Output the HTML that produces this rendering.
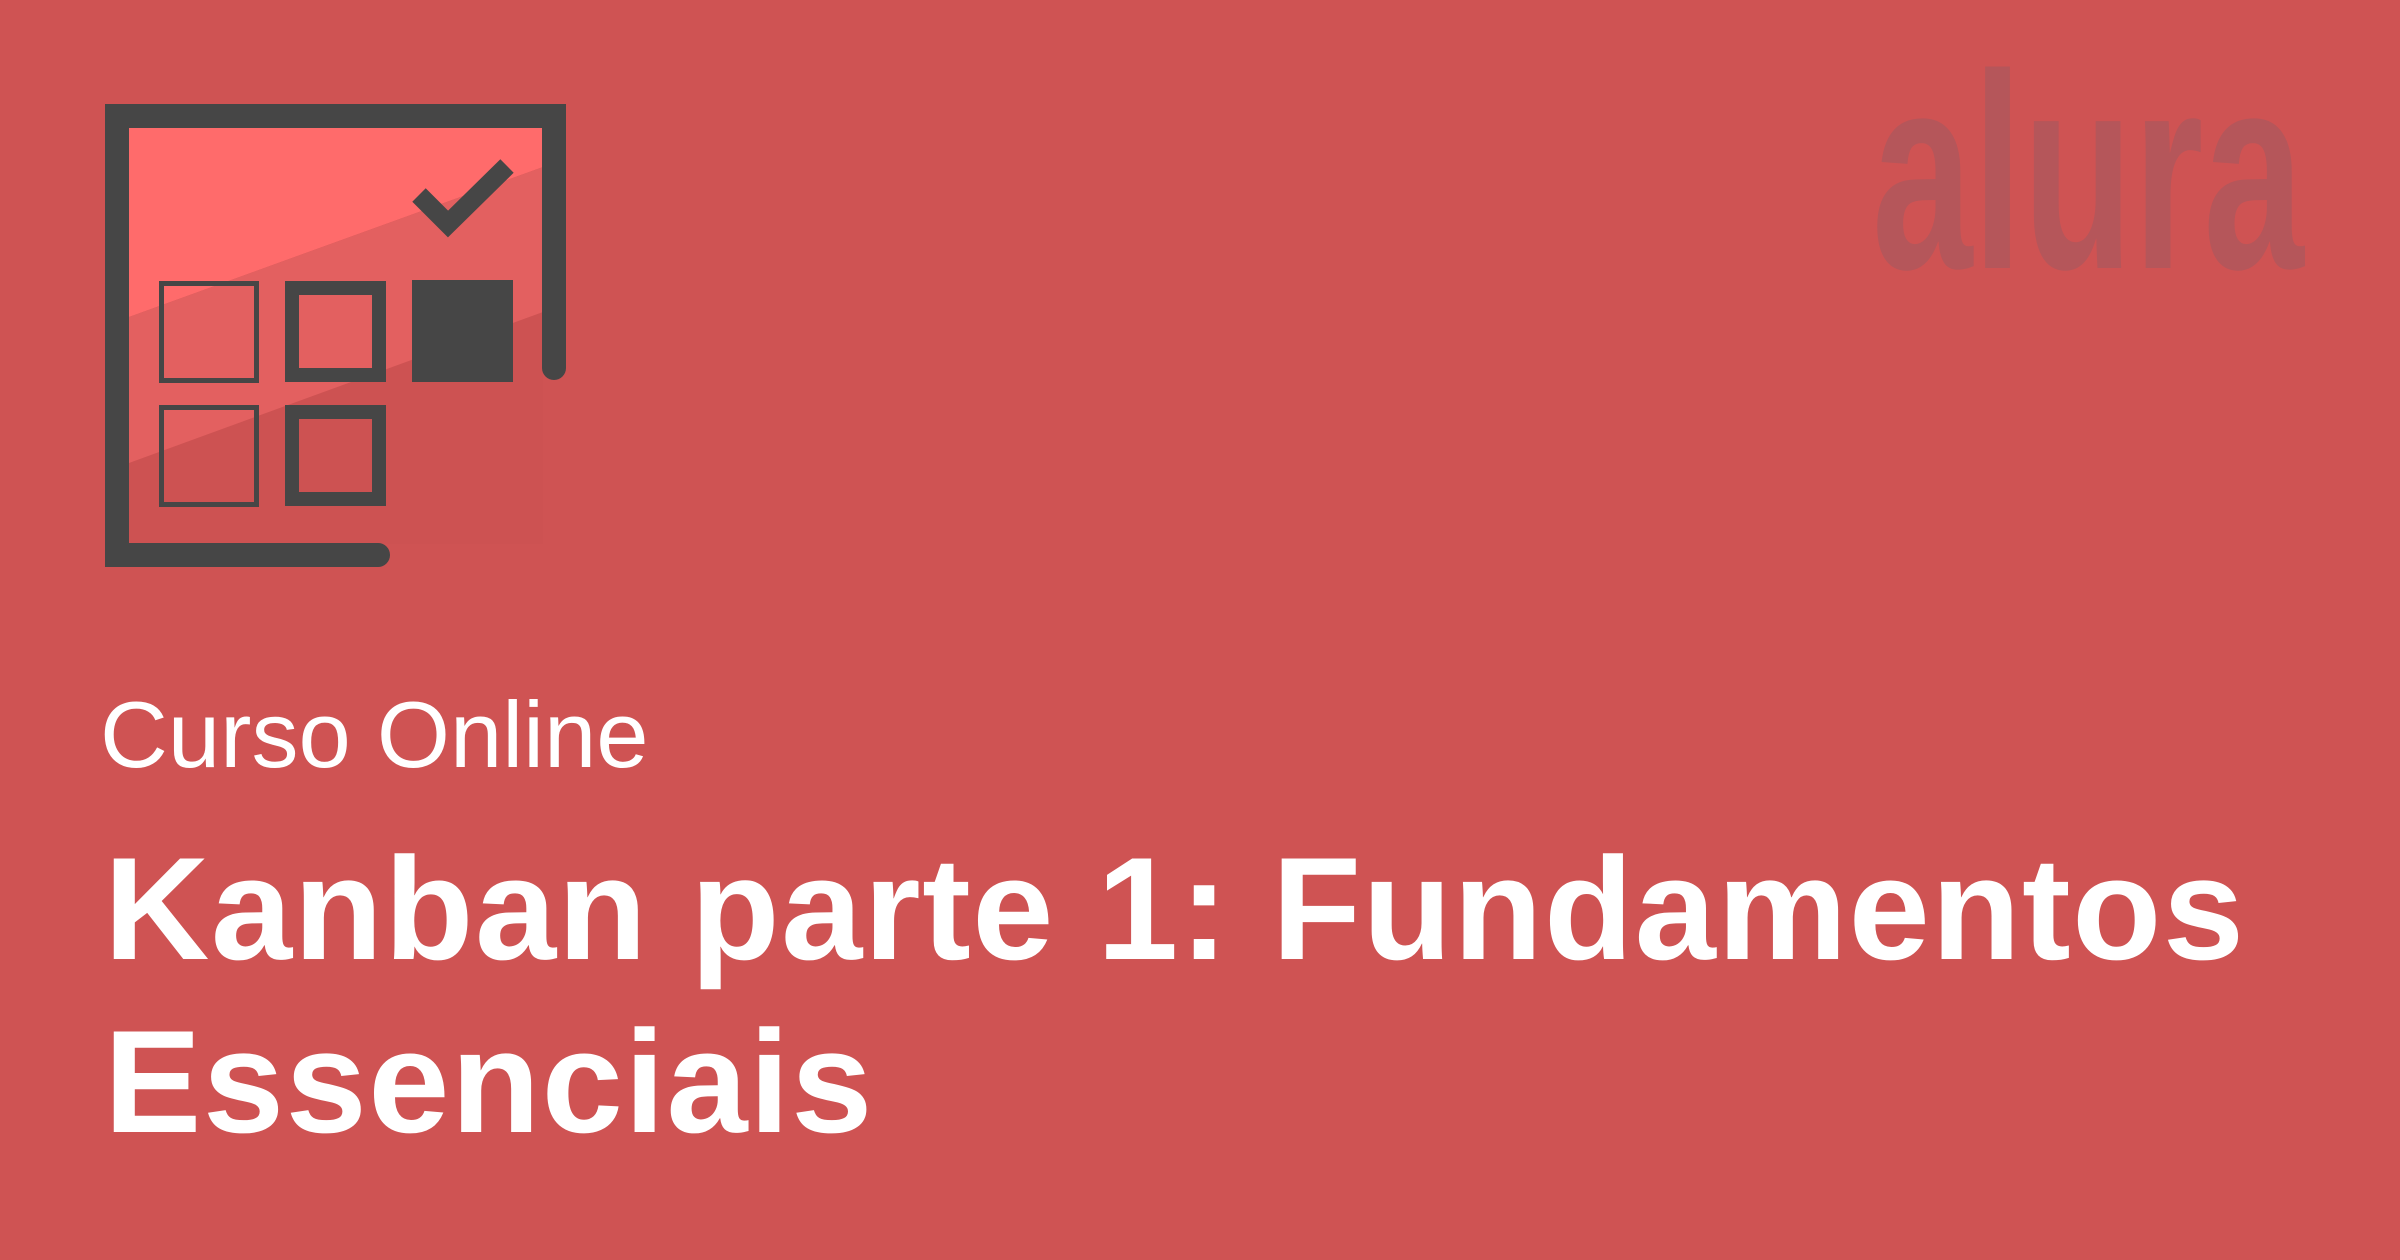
<!DOCTYPE html>
<html><head><meta charset="utf-8"><style>
html,body{margin:0;padding:0}
body{width:2400px;height:1260px;background:#cf5353;position:relative;overflow:hidden;font-family:"Liberation Sans",sans-serif;color:#fff}
.sub{position:absolute;left:100px;top:680px;font-size:94px;line-height:110px;white-space:nowrap;letter-spacing:0px}
.t{position:absolute;left:104px;font-size:146px;font-weight:bold;white-space:nowrap;line-height:170px;letter-spacing:1.5px}
</style></head><body>
<svg width="2400" height="1260" style="position:absolute;left:0;top:0">
<defs><clipPath id="c"><rect x="129" y="128" width="414" height="416"/></clipPath></defs>
<g clip-path="url(#c)">
<rect x="129" y="128" width="414" height="416" fill="#cd5252"/>
<polygon points="129,128 543,128 543,167 129,317" fill="#ff6b6b"/>
<polygon points="129,317 543,167 543,312 129,463" fill="#e36060"/>
</g>
<path d="M378,555 H117 V116 H554 V368" fill="none" stroke="#464646" stroke-width="24" stroke-linecap="round"/>
<rect x="117" y="543" width="10" height="24" fill="#464646"/>
<rect x="161.5" y="283.5" width="95" height="97" fill="none" stroke="#464646" stroke-width="5"/>
<rect x="161.5" y="407.5" width="95" height="97" fill="none" stroke="#464646" stroke-width="5"/>
<rect x="292" y="288" width="87" height="87" fill="none" stroke="#464646" stroke-width="14"/>
<rect x="292" y="412" width="87" height="87" fill="none" stroke="#464646" stroke-width="14"/>
<rect x="412" y="280" width="101" height="102" fill="#464646"/>
<polyline points="419,195 448,224 507,166" fill="none" stroke="#464646" stroke-width="19"/>
<text x="1872" y="268" font-family="Liberation Sans" font-weight="bold" font-size="278" fill="#b5565a" transform="translate(1872,0) scale(0.65,1) translate(-1872,0)">alura</text>
</svg>
<div class="sub">Curso Online</div>
<div class="t" style="top:824px">Kanban parte 1: Fundamentos</div>
<div class="t" style="top:997px">Essenciais</div>
</body></html>
